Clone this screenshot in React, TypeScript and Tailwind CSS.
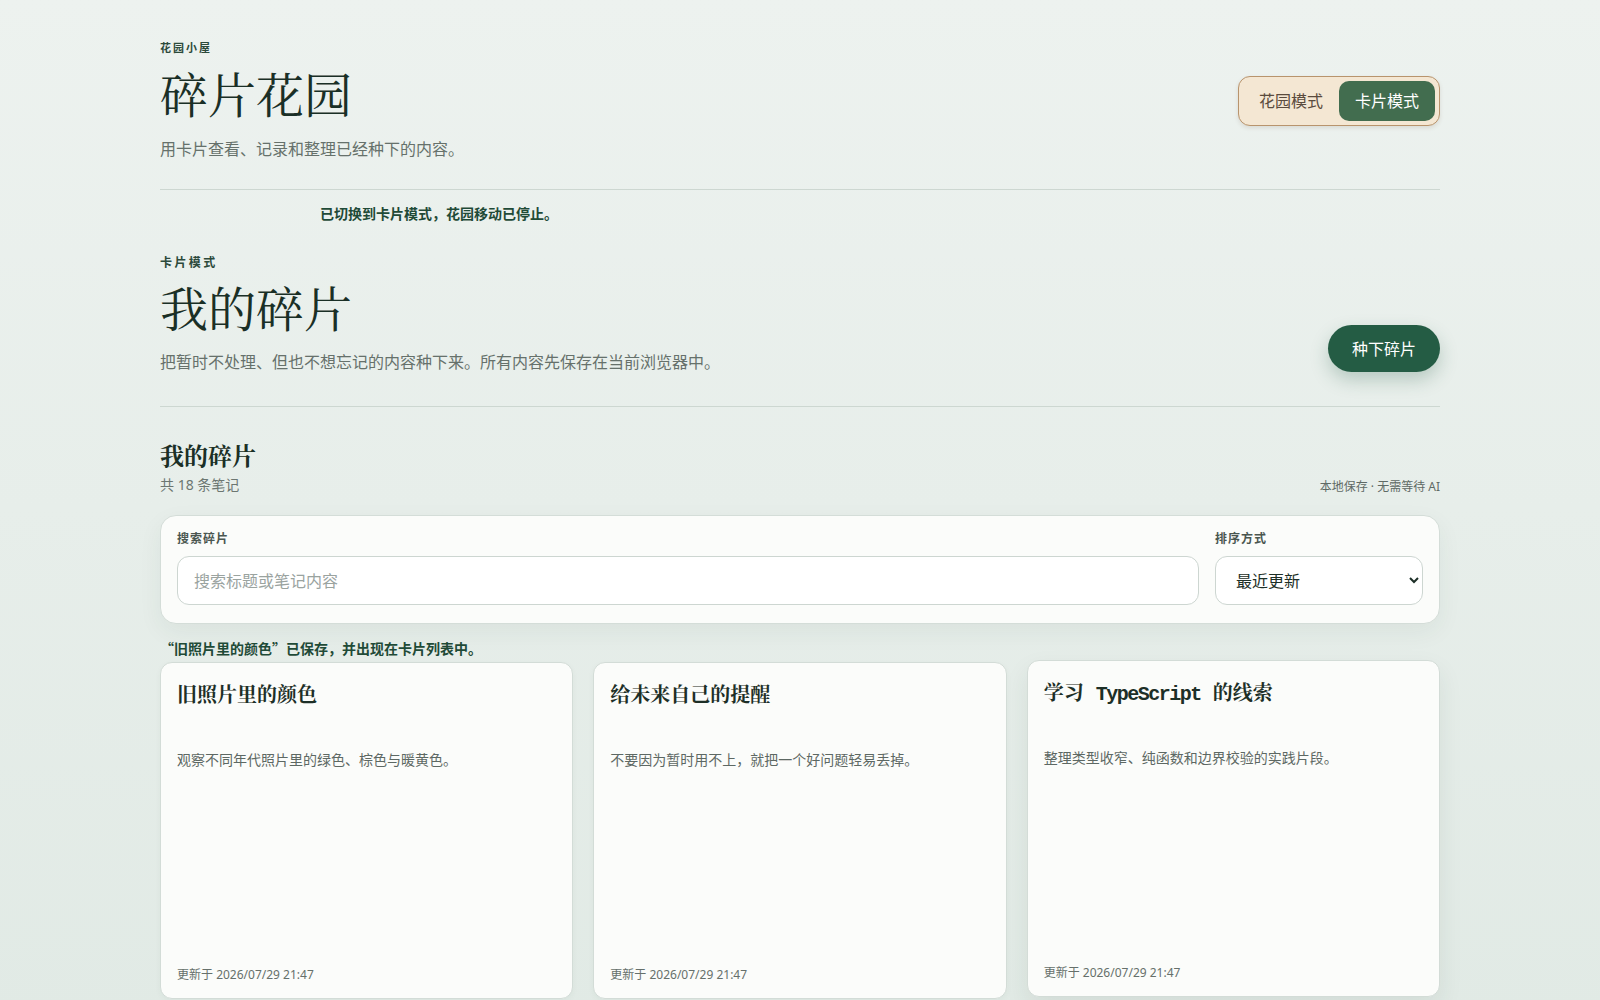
import { useState } from "react";

const serif = "font-['Noto_Serif_CJK_SC','AR_PL_UMing_CN','SimSun','Noto_Sans_CJK_SC',serif]";
const cardTitleFont = "font-['Liberation_Mono','Noto_Serif_CJK_SC','AR_PL_UMing_CN','Noto_Sans_CJK_SC',monospace]";

type Note = { id: number; title: string; body: string; updated: string };

const notes: Note[] = [
  { id: 1, title: "旧照片里的颜色", body: "观察不同年代照片里的绿色、棕色与暖黄色。", updated: "2026/07/29 21:47" },
  { id: 2, title: "给未来自己的提醒", body: "不要因为暂时用不上，就把一个好问题轻易丢掉。", updated: "2026/07/29 21:47" },
  { id: 3, title: "学习 TypeScript 的线索", body: "整理类型收窄、纯函数和边界校验的实践片段。", updated: "2026/07/29 21:47" },
];

// latin runs in titles are a bit tighter than the mono font gives us
const TitleText = ({ text }: { text: string }) => (
  <>
    {text.split(/([A-Za-z]+)/).map((part, i) =>
      /^[A-Za-z]+$/.test(part) ? (
        <span key={i} className="font-semibold tracking-[-1.5px]">
          {part}
        </span>
      ) : (
        <span key={i}>{part}</span>
      )
    )}
  </>
);

const NoteCard = ({ note, lifted }: { note: Note; lifted?: boolean }) => {
  return (
    <article
      className={
        "flex h-[337px] flex-col rounded-xl border border-[#d3dcd7] bg-[#fbfcfa] px-4 pt-5 pb-[14px] " +
        (lifted ? "-translate-y-0.5 shadow-[0_10px_24px_rgba(35,70,52,0.08)]" : "shadow-[0_2px_6px_rgba(35,70,52,0.04)]")
      }
    >
      <h3 className={`${cardTitleFont} text-[20px] leading-7 font-bold text-[#1d2f27]`}>
        <TitleText text={note.title} />
      </h3>
      <p className="mt-[39px] text-sm leading-5 text-[#5d6863]">{note.body}</p>
      <p className="mt-auto text-xs leading-[18px] text-[#66706b]">更新于 {note.updated}</p>
    </article>
  );
};

export default function App() {
  const [mode, setMode] = useState<"garden" | "card">("card");
  const [query, setQuery] = useState("");

  return (
    <div
      lang="zh-CN"
      className="min-h-screen bg-gradient-to-b from-[#edf2ef] to-[#e1eae5] font-['Noto_Sans','Noto_Sans_CJK_SC',sans-serif] text-[#1d2f27]"
    >
      <div className="mx-auto w-[1280px] pt-10">
        {/* Top header */}
        <header className="flex items-center justify-between border-b border-[#cdd7d1] pb-7">
          <div>
            <p className="text-[11px] leading-4 font-bold tracking-[0.18em] text-[#2c4a3b]">花园小屋</p>
            <h1 className={`${serif} mt-2 text-[48px] leading-[58px] font-normal text-[#1a2f26]`}>碎片花园</h1>
            <p className="mt-[15px] text-base leading-6 text-[#66716b]">用卡片查看、记录和整理已经种下的内容。</p>
          </div>
          <div className="flex rounded-xl border border-[#b8946d] bg-[#f4e7d3] p-1 shadow-[0_2px_4px_rgba(90,60,30,0.12)]">
            <button
              onClick={() => setMode("garden")}
              className={
                "h-10 rounded-[10px] px-4 text-base " +
                (mode === "garden" ? "bg-[#426d4f] text-white" : "text-[#5a4b3d]")
              }
            >
              花园模式
            </button>
            <button
              onClick={() => setMode("card")}
              className={
                "h-10 rounded-[10px] px-4 text-base " +
                (mode === "card" ? "bg-[#426d4f] text-white" : "text-[#5a4b3d]")
              }
            >
              卡片模式
            </button>
          </div>
        </header>

        <p className="mt-[13px] pl-40 font-['Noto_Sans_CJK_SC',sans-serif] text-sm leading-5 font-bold text-[#1f4a37]">
          已切换到卡片模式，花园移动已停止。
        </p>

        {/* Card mode header */}
        <section className="mt-8 flex items-end justify-between border-b border-[#cdd7d1] pb-8">
          <div>
            <p className="text-xs leading-4 font-bold tracking-[0.2em] text-[#2c4a3b]">卡片模式</p>
            <h2 className={`${serif} mt-[7px] text-[48px] leading-[58px] font-normal text-[#1a2f26]`}>我的碎片</h2>
            <p className="mt-[14px] text-base leading-6 text-[#66716b]">
              把暂时不处理、但也不想忘记的内容种下来。所有内容先保存在当前浏览器中。
            </p>
          </div>
          <button className="mb-0.5 h-[47px] rounded-full bg-[#245c44] px-6 text-base font-normal text-white shadow-[0_8px_18px_rgba(36,92,68,0.25)]">
            种下碎片
          </button>
        </section>

        {/* List header */}
        <div className="mt-8 flex items-end justify-between">
          <div>
            <h2 className={`${serif} text-2xl leading-8 font-bold text-[#1a2f26]`}>我的碎片</h2>
            <p className="mt-[4px] text-sm leading-5 text-[#6c7671]">共 18 条笔记</p>
          </div>
          <p className="text-xs leading-4 text-[#5f6a65]">本地保存 · 无需等待 AI</p>
        </div>

        {/* Search panel */}
        <div className="mt-5 flex gap-4 rounded-2xl border border-[#d4ddd8] bg-[#fbfcfa] px-4 pt-[13px] pb-[18px] shadow-[0_8px_24px_rgba(30,60,45,0.06)]">
          <label className="flex flex-1 flex-col">
            <span className="text-xs leading-5 font-bold tracking-[0.08em] text-[#4a5650]">搜索碎片</span>
            <input
              value={query}
              onChange={(e) => setQuery(e.target.value)}
              placeholder="搜索标题或笔记内容"
              className="mt-[7px] h-[49px] rounded-xl border border-[#cdd6d1] bg-white px-4 text-base text-[#1d2f27] placeholder:text-[#9aa39f] outline-none"
            />
          </label>
          <label className="flex w-[208px] flex-col">
            <span className="text-xs leading-5 font-bold tracking-[0.08em] text-[#4a5650]">排序方式</span>
            <select
              defaultValue="recent"
              className="mt-[7px] h-[49px] rounded-xl border border-[#cdd6d1] bg-white px-4 text-base text-[#1d2f27] outline-none"
            >
              <option value="recent">最近更新</option>
              <option value="created">最早创建</option>
              <option value="title">标题排序</option>
            </select>
          </label>
        </div>

        <p className="mt-[14px] font-['Noto_Sans_CJK_SC',sans-serif] text-sm leading-5 font-bold text-[#1f4a37]">
          “旧照片里的颜色”已保存，并出现在卡片列表中。
        </p>

        {/* Cards */}
        <div className="mt-1 grid grid-cols-3 gap-5 pb-6">
          {notes.map((n) => (
            <NoteCard key={n.id} note={n} lifted={n.id === 3} />
          ))}
        </div>
      </div>
    </div>
  );
}
